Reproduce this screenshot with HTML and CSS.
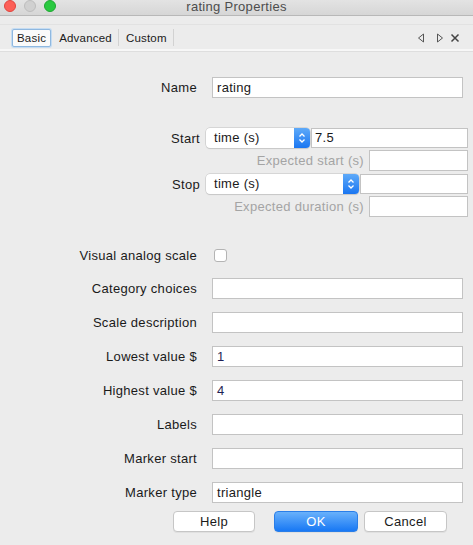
FILE: index.html
```html
<!DOCTYPE html>
<html>
<head>
<meta charset="utf-8">
<link rel="stylesheet" href="styles.css">
</head>
<body>
<div class="window">
  <div class="titlebar">
    <div class="lights">
      <span class="light red"></span>
      <span class="light gray"></span>
      <span class="light green"></span>
    </div>
    <div class="title">rating Properties</div>
  </div>

  <div class="tabbar">
    <div class="tabs">
      <div class="tab active">Basic</div>
      <div class="tab t-adv">Advanced</div>
      <div class="sep"></div>
      <div class="tab t-cus">Custom</div>
      <div class="sep"></div>
    </div>
    <div class="tabtools">
      <svg class="arrow" width="8" height="10" viewBox="0 0 8 10"><path d="M6.5 1 L1.5 5 L6.5 9 Z" fill="none" stroke="#555" stroke-width="1"/></svg>
      <svg class="arrow" width="8" height="10" viewBox="0 0 8 10"><path d="M1.5 1 L6.5 5 L1.5 9 Z" fill="none" stroke="#555" stroke-width="1"/></svg>
      <svg class="close" width="10" height="10" viewBox="0 0 10 10"><path d="M1.5 1.5 L8.5 8.5 M8.5 1.5 L1.5 8.5" stroke="#444" stroke-width="1.5"/></svg>
    </div>
  </div>

  <div class="form">
    <div class="row r-name">
      <div class="lbl">Name</div>
      <div class="field">rating</div>
    </div>

    <div class="row r-start">
      <div class="lbl lbl-wide">Start</div>
      <div class="select sel-short"><span class="sel-text">time (s)</span><span class="stepper"><svg width="8" height="12" viewBox="0 0 8 12"><path d="M1.5 4.5 L4 2 L6.5 4.5 M1.5 7.5 L4 10 L6.5 7.5" fill="none" stroke="#fff" stroke-width="1.3"/></svg></span></div>
      <div class="field f-start">7.5</div>
    </div>
    <div class="row r-exp1">
      <div class="lbl lbl-exp muted">Expected start (s)</div>
      <div class="field f-exp"></div>
    </div>
    <div class="row r-stop">
      <div class="lbl lbl-wide">Stop</div>
      <div class="select sel-long"><span class="sel-text">time (s)</span><span class="stepper"><svg width="8" height="12" viewBox="0 0 8 12"><path d="M1.5 4.5 L4 2 L6.5 4.5 M1.5 7.5 L4 10 L6.5 7.5" fill="none" stroke="#fff" stroke-width="1.3"/></svg></span></div>
      <div class="field f-stop"></div>
    </div>
    <div class="row r-exp2">
      <div class="lbl lbl-exp muted">Expected duration (s)</div>
      <div class="field f-exp"></div>
    </div>

    <div class="row r-vas">
      <div class="lbl">Visual analog scale</div>
      <div class="checkbox"></div>
    </div>

    <div class="row r-cat">
      <div class="lbl">Category choices</div>
      <div class="field"></div>
    </div>
    <div class="row r-std">
      <div class="lbl">Scale description</div>
      <div class="field"></div>
    </div>
    <div class="row r-std">
      <div class="lbl">Lowest value $</div>
      <div class="field num">1</div>
    </div>
    <div class="row r-std">
      <div class="lbl">Highest value $</div>
      <div class="field num">4</div>
    </div>
    <div class="row r-std">
      <div class="lbl">Labels</div>
      <div class="field"></div>
    </div>
    <div class="row r-std">
      <div class="lbl">Marker start</div>
      <div class="field"></div>
    </div>
    <div class="row r-std">
      <div class="lbl">Marker type</div>
      <div class="field">triangle</div>
    </div>

    <div class="buttons">
      <div class="btn b-help">Help</div>
      <div class="btn primary b-ok">OK</div>
      <div class="btn b-cancel">Cancel</div>
    </div>
  </div>
</div>
</body>
</html>
```
FILE: styles.css
```css
html, body {
  margin: 0;
  padding: 0;
  background: #ececec;
}
body {
  font-family: "Liberation Sans", Arial, sans-serif;
  font-size: 13px;
  letter-spacing: 0.3px;
  color: #1a1a1a;
  width: 473px;
  height: 545px;
  overflow: hidden;
}
.window {
  width: 473px;
}
.titlebar {
  position: relative;
  height: 15px;
  background: linear-gradient(#e3e3e3, #d6d6d6);
  border-bottom: 1px solid #b8b8b8;
  display: flex;
  align-items: center;
  justify-content: center;
}
.lights {
  position: absolute;
  left: 4px;
  top: 0;
  display: flex;
  gap: 8px;
}
.light {
  width: 12px;
  height: 12px;
  border-radius: 50%;
  box-sizing: border-box;
}
.light.red { background: #fc5f57; border: 1px solid #e0443e; }
.light.gray { background: #d0d0d0; border: 1px solid #bdbdbd; }
.light.green { background: #2ac940; border: 1px solid #1ea732; }
.title {
  color: #4d4d4d;
  font-size: 13px;
  line-height: 15px;
  margin-top: -2px;
}

.tabbar {
  margin-top: 8px;
  height: 24px;
  border-top: 1px solid #e2e2e2;
  border-bottom: 2px solid #f7f7f7;
  box-shadow: 0 1px 0 #dedede;
  display: flex;
  align-items: center;
  justify-content: space-between;
  padding: 0 13px 0 12px;
}
.tabs {
  display: flex;
  align-items: center;
  height: 100%;
}
.tab {
  font-size: 11.5px;
  letter-spacing: 0.2px;
  color: #1a1a1a;
  height: 16px;
  line-height: 16px;
  margin-top: 1px;
}
.tab.active {
  border: 1px solid #8fb8e0;
  border-radius: 2px;
  box-shadow: 0 0 0 1px #c5dcf2;
  background: #fafafa;
  padding: 0 4px;
  margin-right: 2px;
}
.t-adv { padding: 0 6px; }
.t-cus { padding: 0 6px 0 7px; }
.sep {
  width: 1px;
  height: 17px;
  background: #d2d2d2;
  margin-top: 1px;
}
.tabtools {
  display: flex;
  align-items: center;
  margin-top: 1px;
}
.arrow { margin-right: 11px; }
.arrow + .arrow { margin-right: 6px; }

.form {
  padding-top: 26px;
}
.row {
  display: flex;
  align-items: center;
  height: 21px;
}
.lbl {
  width: 197px;
  text-align: right;
  flex: none;
  white-space: nowrap;
}
.lbl-wide { width: 200px; }
.lbl-exp { width: 364px; }
.muted { color: #a4a4a4; }
.field {
  box-sizing: border-box;
  width: 251px;
  height: 21px;
  margin-left: 15px;
  background: #fff;
  border: 1px solid #c3c3c3;
  padding-left: 4px;
  line-height: 19px;
  flex: none;
}
.num { color: #1f1f55; }

.r-start { margin-top: 30px; height: 20px; }
.r-exp1 { margin-top: 2px; }
.r-stop { margin-top: 3px; height: 20px; }
.r-exp2 { margin-top: 2px; }
.r-vas { margin-top: 28px; }
.r-cat { margin-top: 12px; }
.r-std { margin-top: 13px; }

.select {
  box-sizing: border-box;
  margin-left: 6px;
  height: 20px;
  background: #fff;
  border-radius: 4px;
  box-shadow: 0 0 0 0.5px #c0c0c0, 0 1px 1px rgba(0,0,0,0.12);
  display: flex;
  justify-content: space-between;
  align-items: stretch;
  flex: none;
  overflow: hidden;
}
.sel-short { width: 104px; }
.sel-long { width: 153px; }
.sel-text {
  padding-left: 8px;
  line-height: 20px;
}
.stepper {
  width: 16px;
  background: linear-gradient(#5eaaf9, #1a76f1);
  display: flex;
  align-items: center;
  justify-content: center;
}
.f-start {
  margin-left: 1px;
  width: 157px;
  height: 20px;
  padding-left: 3px;
  line-height: 18px;
}
.f-stop {
  margin-left: 1px;
  width: 108px;
  height: 20px;
}
.f-exp {
  margin-left: 5px;
  width: 99px;
}

.checkbox {
  box-sizing: border-box;
  margin-left: 17px;
  width: 13px;
  height: 13px;
  background: #fff;
  border: 1px solid #b4b4b4;
  border-radius: 3px;
}

.buttons {
  display: flex;
  margin-top: 8px;
  padding-left: 173px;
}
.btn {
  box-sizing: border-box;
  height: 21px;
  line-height: 19px;
  text-align: center;
  background: #fff;
  border: 1px solid #c6c6c6;
  border-radius: 4px;
  box-shadow: 0 1px 0 rgba(0,0,0,0.05);
}
.b-help { width: 82px; }
.b-ok { width: 84px; margin-left: 19px; }
.b-cancel { width: 83px; margin-left: 6px; }
.btn.primary {
  background: linear-gradient(#69b1fb, #1878f4);
  border-color: #2a7ee8;
  color: #fff;
}
```
